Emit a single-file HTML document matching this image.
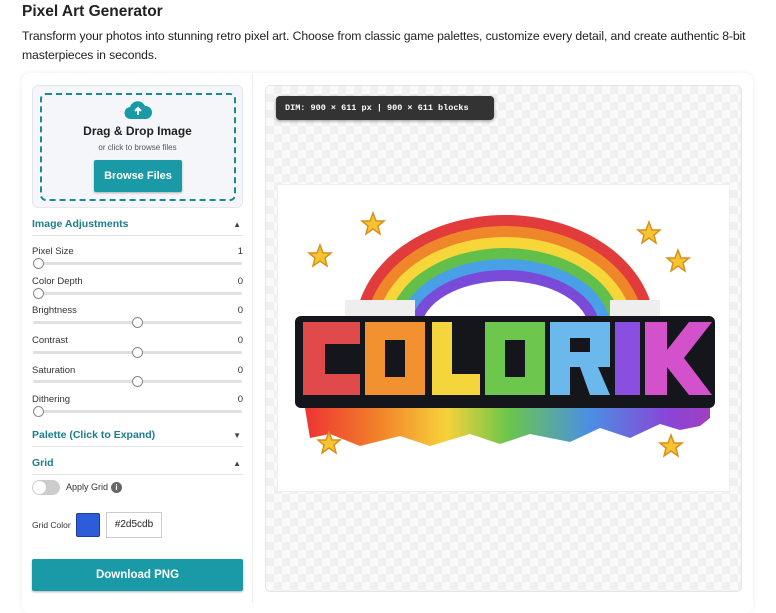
<!DOCTYPE html>
<html><head><meta charset="utf-8"><style>
*{box-sizing:border-box;margin:0;padding:0}
body{width:776px;height:599px;overflow:hidden;background:#fff;font-family:"Liberation Sans",sans-serif;color:#222;position:relative}
h1{position:absolute;left:22px;top:3px;font-size:15.5px;font-weight:bold;color:#222}
.sub{position:absolute;left:22px;top:27px;width:750px;font-size:12.2px;line-height:19px;color:#222;letter-spacing:-0.1px}
.card{position:absolute;left:22px;top:73px;width:731px;height:540px;background:#fff;border-radius:8px;box-shadow:0 0 6px rgba(0,0,0,.08)}
.left{position:absolute;left:22px;top:73px;width:231px;height:530px;border-right:1px solid #eee}
.drop{position:absolute;left:32px;top:85px;width:211px;height:123px;background:#f4f6f9;border-radius:6px;border:1px solid #e3e7ec}
.dash{position:absolute;left:40px;top:93px;width:196px;height:108px;border:2px dashed #1c8a95;border-radius:6px}
.dd{position:absolute;left:32px;width:211px;text-align:center}
.btn{position:absolute;background:#1a9aa6;color:#fff;font-weight:bold;text-align:center;border-radius:2px;box-shadow:0 1px 2px rgba(0,0,0,.3)}
.sec{position:absolute;left:32px;width:211px;font-size:10.5px;font-weight:bold;color:#1b7d8d;border-bottom:1px solid #e4e4e4;height:18px}
.sec span{position:absolute;right:2px;top:2px;font-size:8px;color:#444}
.lab{position:absolute;left:32px;width:211px;font-size:9.5px;color:#333}
.lab b{position:absolute;right:0;font-weight:normal}
.tr{position:absolute;left:33px;width:209px;height:3px;background:#e0e0e0;border-radius:2px}
.th{position:absolute;width:11px;height:11px;border-radius:50%;background:#fff;border:1px solid #888;top:-4px}
.prev{position:absolute;left:265px;top:85px;width:477px;height:507px;border:1px solid #e4e4e4;border-radius:5px;background-color:#fafafa;background-image:linear-gradient(45deg,#f0f0f0 25%,transparent 25%,transparent 75%,#f0f0f0 75%),linear-gradient(45deg,#f0f0f0 25%,transparent 25%,transparent 75%,#f0f0f0 75%);background-size:16px 16px;background-position:0 0,8px 8px}
.dim{position:absolute;left:276px;top:96px;width:218px;height:24px;background:#333;border-radius:4px;color:#fff;font-family:"Liberation Mono",monospace;font-size:8.5px;font-weight:bold;line-height:24px;padding-left:9px;box-shadow:0 1px 3px rgba(0,0,0,.4)}
</style></head><body>
<h1>Pixel Art Generator</h1>
<div class="sub">Transform your photos into stunning retro pixel art. Choose from classic game palettes, customize every detail, and create authentic 8-bit masterpieces in seconds.</div>
<div class="card"></div>
<div class="left"></div>
<div class="drop"></div><div class="dash"></div>
<svg style="position:absolute;left:124px;top:100px" width="28" height="20" viewBox="0 0 28 20"><path d="M7 19a6 6 0 0 1-1-12 8 8 0 0 1 15-1 6.5 6.5 0 0 1 1 13z" fill="#1a9aa6"/><path d="M14 15V8M11 11l3-3 3 3" stroke="#fff" stroke-width="2" fill="none"/></svg>
<div class="dd" style="top:124px;font-size:12px;font-weight:bold;color:#222">Drag &amp; Drop Image</div>
<div class="dd" style="top:143px;font-size:8px;color:#555">or click to browse files</div>
<div class="btn" style="left:94px;top:160px;width:88px;height:32px;line-height:32px;font-size:11px">Browse Files</div>
<div class="sec" style="top:218px">Image Adjustments<span>▲</span></div>
<div class="lab" style="top:246px">Pixel Size<b>1</b></div><div class="tr" style="top:262px"><div class="th" style="left:0"></div></div>
<div class="lab" style="top:276px">Color Depth<b>0</b></div><div class="tr" style="top:292px"><div class="th" style="left:0"></div></div>
<div class="lab" style="top:305px">Brightness<b>0</b></div><div class="tr" style="top:321px"><div class="th" style="left:99px"></div></div>
<div class="lab" style="top:335px">Contrast<b>0</b></div><div class="tr" style="top:351px"><div class="th" style="left:99px"></div></div>
<div class="lab" style="top:365px">Saturation<b>0</b></div><div class="tr" style="top:380px"><div class="th" style="left:99px"></div></div>
<div class="lab" style="top:394px">Dithering<b>0</b></div><div class="tr" style="top:410px"><div class="th" style="left:0"></div></div>
<div class="sec" style="top:429px">Palette (Click to Expand)<span>▼</span></div>
<div class="sec" style="top:457px">Grid<span>▲</span></div>
<div style="position:absolute;left:32px;top:480px;width:28px;height:15px;border-radius:8px;background:#ccc"><div style="position:absolute;left:1px;top:1px;width:13px;height:13px;border-radius:50%;background:#fff"></div></div>
<div style="position:absolute;left:66px;top:482px;font-size:9px;color:#333">Apply Grid</div>
<div style="position:absolute;left:111px;top:482px;width:11px;height:11px;border-radius:50%;background:#666;color:#fff;font-size:8px;font-weight:bold;text-align:center;line-height:11px">i</div>
<div style="position:absolute;left:32px;top:520px;font-size:8.5px;color:#333">Grid Color</div>
<div style="position:absolute;left:76px;top:513px;width:24px;height:24px;background:#2d5cdb;border:1px solid #1d3c99;border-radius:2px"></div>
<div style="position:absolute;left:106px;top:512px;width:56px;height:26px;border:1px solid #ccc;font-size:10px;line-height:24px;text-align:center;color:#222">#2d5cdb</div>
<div class="btn" style="left:32px;top:559px;width:211px;height:32px;line-height:32px;font-size:11.5px">Download PNG</div>
<div class="prev"></div>
<div class="dim">DIM: 900 × 611 px | 900 × 611 blocks</div>
<svg style="position:absolute;left:277px;top:184px" width="453" height="308" viewBox="277 184 453 308">
<defs><clipPath id="c"><rect x="277" y="184" width="453" height="134"/></clipPath>
<linearGradient id="g" x1="0" x2="1"><stop offset="0" stop-color="#e33"/><stop offset=".2" stop-color="#f28a2a"/><stop offset=".35" stop-color="#f6d23a"/><stop offset=".5" stop-color="#6cc64a"/><stop offset=".7" stop-color="#4a90e2"/><stop offset=".9" stop-color="#8a44d8"/><stop offset="1" stop-color="#a040c0"/></linearGradient></defs>
<rect x="277" y="184" width="453" height="308" fill="#fff" stroke="#e2e2e2"/>
<g clip-path="url(#c)">
<ellipse cx="505" cy="330" rx="150" ry="115" fill="#e23b3b"/>
<ellipse cx="505" cy="330" rx="139" ry="104" fill="#f0862a"/>
<ellipse cx="505" cy="330" rx="128" ry="93" fill="#f7d63a"/>
<ellipse cx="505" cy="330" rx="117" ry="82" fill="#62c04a"/>
<ellipse cx="505" cy="330" rx="106" ry="71" fill="#4aa0e6"/>
<ellipse cx="505" cy="330" rx="95" ry="60" fill="#7a4ad8"/>
<ellipse cx="505" cy="330" rx="84" ry="49" fill="#fff"/>
<rect x="345" y="300" width="70" height="20" fill="#eee"/><rect x="610" y="300" width="50" height="20" fill="#eee"/>
</g>
<path d="M305 408h405v10l-10 8-20 4-20-6-30 14-30-10-30 14-40-8-30 10-30-10-40 12-30-10-40 10-30-12-20 4z" fill="url(#g)"/>
<rect x="295" y="316" width="420" height="92" rx="6" fill="#15151c"/>
<g>
<path d="M303 322h57v22h-35v30h35v21h-57z" fill="#e14a4a"/>
<path d="M365 322h60v73h-60zM385 340v37h20v-37z" fill="#f2912f" fill-rule="evenodd"/>
<path d="M432 322h20v52h28v21h-48z" fill="#f5d53c"/>
<path d="M485 322h60v73h-60zM505 340v37h20v-37z" fill="#6cc74c" fill-rule="evenodd"/>
<path d="M550 322h60v45l-12 0 12 28h-20l-10-28h-10v28h-20zM570 338v14h20v-14z" fill="#6ab8ec" fill-rule="evenodd"/>
<rect x="615" y="322" width="25" height="73" fill="#8a4ee0"/>
<path d="M645 322h22v28l22-28h23l-28 36 28 37h-23l-22-28v28h-22z" fill="#d352cc"/>
</g>
<g fill="#f5c430" stroke="#d9901a" stroke-width="1.5">
<path d="M373 213l3 8 8 0-6 5 2 8-7-5-7 5 2-8-6-5 8 0z"/>
<path d="M320 245l3 8 8 0-6 5 2 8-7-5-7 5 2-8-6-5 8 0z"/>
<path d="M649 222l3 8 8 0-6 5 2 8-7-5-7 5 2-8-6-5 8 0z"/>
<path d="M678 250l3 8 8 0-6 5 2 8-7-5-7 5 2-8-6-5 8 0z"/>
<path d="M329 432l3 8 8 0-6 5 2 8-7-5-7 5 2-8-6-5 8 0z"/>
<path d="M671 435l3 8 8 0-6 5 2 8-7-5-7 5 2-8-6-5 8 0z"/>
</g>
</svg>
</body></html>
